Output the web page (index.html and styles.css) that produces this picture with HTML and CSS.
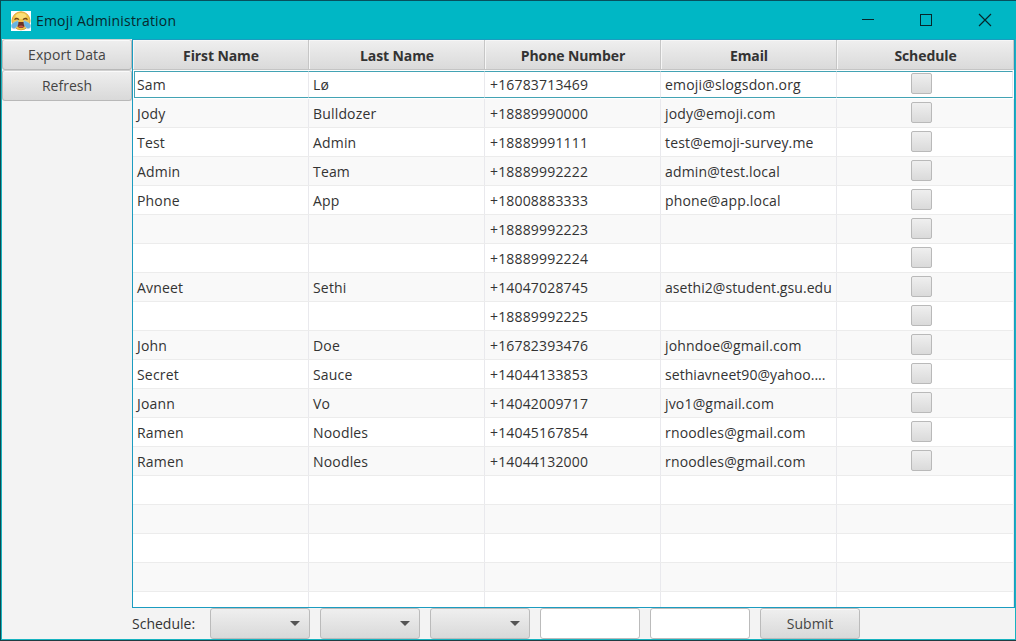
FILE: index.html
```html
<!DOCTYPE html>
<html lang="en">
<head>
<meta charset="utf-8">
<title>Emoji Administration</title>
<link rel="stylesheet" href="styles.css">
</head>
<body>
<div class="window">
  <header class="titlebar">
    <svg class="logo" width="20" height="20" viewBox="0 0 20 20">
      <rect width="20" height="20" fill="#fff"/>
      <circle cx="10" cy="9.8" r="9" fill="#f3c548" stroke="#dba63a"/>
      <ellipse cx="10" cy="5" rx="5.5" ry="3" fill="#fbdf78"/>
      <path d="M3.5 8.6Q5.5 6.4 8 8.6M12 8.6Q14.5 6.4 16.5 8.6" fill="none" stroke="#70451c" stroke-width="1.2"/>
      <path d="M5 11H15Q14.5 17 10 17T5 11Z" fill="#6b3324"/>
      <path d="M7 15.4Q10 13.4 13 15.4Q10 17.5 7 15.4Z" fill="#c9534a"/>
      <path d="M7.2 9.4Q7.4 16 3.6 17.6Q-.2 18 .3 14Q1.8 11 7.2 9.4ZM12.8 9.4Q12.6 16 16.4 17.6Q20.2 18 19.7 14Q18.2 11 12.8 9.4Z" fill="#68b4e2" stroke="#a9d4e6" stroke-width=".5"/>
    </svg>
    <span class="title">Emoji Administration</span>
    <svg class="controls" width="130" height="14" viewBox="0 0 130 14" fill="none" stroke="#06262b" stroke-width="1">
      <path d="M0 6.5H12"/>
      <rect x="58.5" y="1.5" width="11" height="11"/>
      <path stroke-width="1.15" d="M117 1L129 13M129 1L117 13"/>
    </svg>
  </header>
  <div class="body">
    <nav class="sidebar">
      <button class="btn export">Export Data</button>
      <button class="btn">Refresh</button>
    </nav>
    <main class="main">
      <section class="table">
        <div class="head">
          <span>First Name</span><span>Last Name</span><span>Phone Number</span><span>Email</span><span>Schedule</span>
        </div>
        <div class="rows" id="rows"></div>
      </section>
      <footer class="form">
        <span class="label">Schedule:</span>
        <div class="field combo"><i class="arrow"></i></div>
        <div class="field combo"><i class="arrow"></i></div>
        <div class="field combo"><i class="arrow"></i></div>
        <div class="field input"></div>
        <div class="field input"></div>
        <button class="field submit">Submit</button>
      </footer>
    </main>
  </div>
</div>
<script src="app.js"></script>
</body>
</html>
```
FILE: styles.css
```css
* { box-sizing: border-box; }
body { margin: 0; font-family: "Open Sans", "Noto Sans", sans-serif; font-size: 14px; color: #333; overflow: hidden; }
.window { width: 1016px; height: 641px; display: flex; flex-direction: column; background: #f3f3f3; border-top: 1px solid #07505d; border-left: 1px solid #0b4b50; border-bottom: 1px solid #203c42; }
.titlebar { height: 38px; flex: none; display: flex; align-items: center; background: #00b7c5; color: #08282d; padding: 0 24px 0 10px; }
.logo { margin-top: 1px; }
.title { margin-left: 5px; letter-spacing: 0.18px; }
.controls { margin-left: auto; }
.body { flex: 1; min-height: 0; display: flex; border: solid #16b3c0; border-width: 0 1px 1px; }
.sidebar { width: 130px; flex: none; display: flex; flex-direction: column; }
.btn, .submit { font: inherit; color: #444; padding: 0; border: 1px solid #b8b8b8; border-radius: 3px; background: linear-gradient(#efefef, #d9d9d9); box-shadow: inset 0 1px #fafafa; }
.btn { height: 31px; flex: none; border-top-color: #d0d0d0; }
.export { letter-spacing: 0.06px; }
.main { flex: 1; min-width: 0; display: flex; flex-direction: column; }
.table { height: 569px; flex: none; display: flex; flex-direction: column; border: 1px solid #1b9cc0; background: #fff; box-shadow: inset 0 -1px #a5d9e6, inset 1px 0 #a5d9e6; }
.head { height: 30px; flex: none; display: grid; grid-template-columns: 176px 176px 176px 176px 1fr; background: linear-gradient(#efefef, #dadada); border-bottom: 1px solid #c4c4c4; font-weight: 700; letter-spacing: -0.1px; }
.head span { display: flex; align-items: center; justify-content: center; padding: 2px 0 0 1px; border-right: 1px solid #c6c6c6; box-shadow: inset 1px 1px #f6f6f6; }
.rows { flex: 1; min-height: 0; overflow: hidden; letter-spacing: 0.17px; }
.row { height: 29px; display: grid; grid-template-columns: 176px 176px 176px 176px 1fr; border-bottom: 1px solid #ececec; background: #fff; }
.row:nth-child(even) { background: #f9f9f9; }
.cell { border-right: 1px solid #e9e9ed; padding: 0 0 0 4px; line-height: 29px; white-space: nowrap; overflow: hidden; }
.phone { padding-left: 5px; }
.long { letter-spacing: 0.06px; }
.check { display: flex; justify-content: center; padding: 3px 8px 0 0; }
.box { width: 21px; height: 21px; border: 1px solid #b9b9b9; border-radius: 2px; background: linear-gradient(#efefef, #dadada); }
.selected { border-bottom: 0; padding: 1px 0; }
.selected .cell { border-top: 1px solid #43a3b4; border-bottom: 1px solid #43a3b4; line-height: 26px; padding-top: 0; }
.selected .check { padding-top: 1px; margin-right: 1px; padding-right: 7px; }
.selected .first { margin-left: 1px; padding-left: 2px; border-left: 1px solid #43a3b4; }
.form { flex: 1; display: flex; }
.label { width: 78px; line-height: 31px; }
.field { width: 100px; height: 31px; margin-right: 10px; border: 1px solid #bbb; border-radius: 3px; flex: none; }
.combo { display: flex; align-items: center; justify-content: flex-end; padding-right: 9px; background: linear-gradient(#efefef, #d9d9d9); }
.arrow { border: solid transparent; border-width: 5px 5px 0; border-top-color: #555; }
.input { background: #fff; }
```
FILE: app.js
```js
const people = [
  ["Sam", "Lø", "+16783713469", "emoji@slogsdon.org"],
  ["Jody", "Bulldozer", "+18889990000", "jody@emoji.com"],
  ["Test", "Admin", "+18889991111", "test@emoji-survey.me"],
  ["Admin", "Team", "+18889992222", "admin@test.local"],
  ["Phone", "App", "+18008883333", "phone@app.local"],
  ["", "", "+18889992223", ""],
  ["", "", "+18889992224", ""],
  ["Avneet", "Sethi", "+14047028745", "asethi2@student.gsu.edu"],
  ["", "", "+18889992225", ""],
  ["John", "Doe", "+16782393476", "johndoe@gmail.com"],
  ["Secret", "Sauce", "+14044133853", "sethiavneet90@yahoo...."],
  ["Joann", "Vo", "+14042009717", "jvo1@gmail.com"],
  ["Ramen", "Noodles", "+14045167854", "rnoodles@gmail.com"],
  ["Ramen", "Noodles", "+14044132000", "rnoodles@gmail.com"]
];
const names = ["first", "last", "phone", "email"];
const rows = document.getElementById("rows");
for (let i = 0; i < 19; i++) {
  const row = document.createElement("div");
  row.className = i === 0 ? "row selected" : "row";
  names.forEach((name, c) => {
    const cell = document.createElement("div");
    const text = people[i] ? people[i][c] : "";
    cell.className = "cell " + name + (text.length > 20 ? " long" : "");
    cell.textContent = text;
    row.append(cell);
  });
  const check = document.createElement("div");
  check.className = "cell check";
  if (people[i]) {
    const box = document.createElement("span");
    box.className = "box";
    check.append(box);
  }
  row.append(check);
  rows.append(row);
}
```
